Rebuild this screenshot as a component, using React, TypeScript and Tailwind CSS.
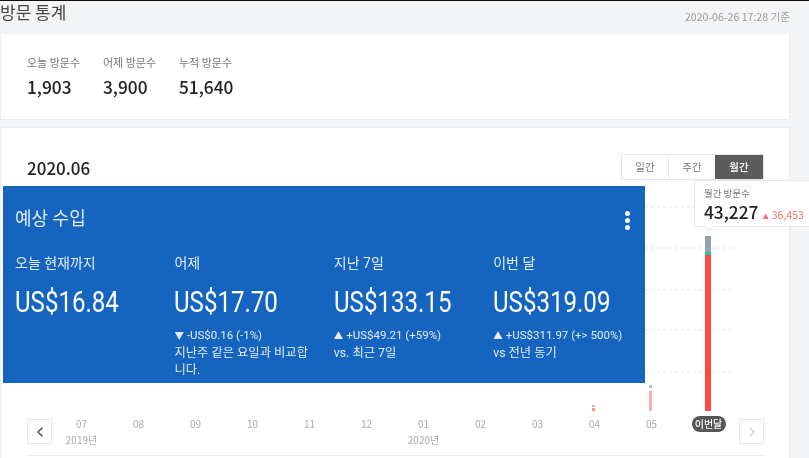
const sans = "font-['Noto_Sans_CJK_KR','Noto_Sans',sans-serif]";
const roboto = "font-['Roboto','Noto_Sans_CJK_KR',sans-serif]";

const totals = [
  { label: "오늘 방문수", value: "1,903" },
  { label: "어제 방문수", value: "3,900" },
  { label: "누적 방문수", value: "51,640" },
];

const earnings = [
  { label: "오늘 현재까지", value: "US$16.84", arrow: "", delta: "", notes: [] as string[] },
  { label: "어제", value: "US$17.70", arrow: "▼", delta: "-US$0.16 (-1%)", notes: ["지난주 같은 요일과 비교합", "니다."] },
  { label: "지난 7일", value: "US$133.15", arrow: "▲", delta: "+US$49.21 (+59%)", notes: ["vs. 최근 7일"] },
  { label: "이번 달", value: "US$319.09", arrow: "▲", delta: "+US$311.97 (+> 500%)", notes: ["vs 전년 동기"] },
];

const months = ["07", "08", "09", "10", "11", "12", "01", "02", "03", "04", "05"];

function Chart() {
  return (
    <svg className="h-[231px] w-full" viewBox="0 0 737 231">
      {[27, 68, 110, 150, 192].map((y) => (
        <line key={y} x1="618" x2="708" y1={y} y2={y} stroke="#e3e5e8" strokeDasharray="3 3" />
      ))}
      <rect x="678" y="56" width="6" height="16" fill="#98a0a8" />
      <rect x="678" y="72" width="6" height="3" fill="#1fc1a0" />
      <rect x="678" y="75" width="6" height="156" fill="#fb4a44" />
      <rect x="622" y="205" width="3" height="3" fill="#b8bec4" />
      <rect x="622" y="211" width="3" height="20" fill="#fbb0ac" />
      <rect x="565" y="225" width="3" height="2" fill="#fbb0ac" />
      <rect x="565" y="228" width="3" height="3" fill="#fb8d88" />
    </svg>
  );
}

export default function App() {
  return (
    <div className={`relative h-[458px] w-[809px] overflow-hidden border-t border-[#111] bg-[#f3f4f6] blur-[0.4px] ${sans}`}>
      {/* 헤더 */}
      <div className="flex h-[32px] w-[790px] items-center justify-between">
        <h1 className="-mt-[10px] text-[17px] leading-[22px] text-[#444]">방문 통계</h1>
        <span className="-mt-[1px] text-[10.6px] text-[#999]">2020-06-26 17:28 기준</span>
      </div>

      {/* 방문수 */}
      <div className="flex h-[87px] w-[790px] gap-[21px] border border-[#ebedf0] bg-white pt-[20px] pl-[26px]">
        {totals.map((t) => (
          <div key={t.label} className="w-[55px]">
            <p className="text-[11px] leading-[16px] whitespace-nowrap text-[#777]">{t.label}</p>
            <p className="mt-[5px] text-[17.3px] leading-[24px] font-medium text-[#222]">{t.value}</p>
          </div>
        ))}
      </div>

      {/* 차트 카드 */}
      <div className="mt-[7px] h-[340px] w-[790px] border border-[#ebedf0] bg-white pt-[26px] pr-[25px] pl-[26px]">
        <div className="flex h-[26px] items-start justify-between">
          <p className="text-[17px] leading-[28px] font-medium text-[#222]">2020.06</p>
          <div className="flex h-[26px] border border-[#e3e5ea] text-[10.5px] text-[#777]">
            <span className="flex w-[47px] items-center justify-center border-r border-[#e3e5ea]">일간</span>
            <span className="flex w-[46px] items-center justify-center">주간</span>
            <span className="flex w-[48px] items-center justify-center bg-[#5c5c5c] font-medium text-white">월간</span>
          </div>
        </div>

        <Chart />

        <div className="mt-[8px] flex items-start">
          <button className="flex h-[25px] w-[25px] shrink-0 items-center justify-center border border-[#e3e5ea] text-[#555]">
            <svg width="8" height="12" viewBox="0 0 8 12" fill="none" stroke="currentColor" strokeWidth="1.5">
              <path d="M6.5 1.5 2 6l4.5 4.5" />
            </svg>
          </button>
          <div className="-mt-[3px] ml-[1px] grid w-[684px] grid-cols-12 text-center text-[10px] leading-[16px] text-[#aaa]">
            {months.map((m) => (
              <span key={m} className="w-[57px]">{m}</span>
            ))}
            <span className="mx-auto w-[34px] rounded-full bg-[#555] text-[10px] font-medium text-white">이번달</span>
            <span className="col-span-6 w-[57px]">2019년</span>
            <span className="col-span-6 w-[57px]">2020년</span>
          </div>
          <button className="ml-[2px] flex h-[25px] w-[25px] shrink-0 items-center justify-center border border-[#e3e5ea] text-[#ccc]">
            <svg width="8" height="12" viewBox="0 0 8 12" fill="none" stroke="currentColor" strokeWidth="1.2">
              <path d="M1.5 1.5 6 6l-4.5 4.5" />
            </svg>
          </button>
        </div>
        <div className="mt-[7px] h-px bg-[#ebedf0]" />
      </div>

      {/* 툴팁 */}
      <div className="absolute top-[179px] left-[694px] h-[47px] w-[120px] border border-[#e6e8ec] bg-white pt-[6px] pl-[9px]">
        <p className="text-[9.5px] leading-[13px] text-[#777]">월간 방문수</p>
        <p className="mt-[1px] flex items-baseline gap-[5px] text-[17.3px] leading-[22px] font-medium text-[#222]">
          43,227 <span className="text-[10.5px] font-normal text-[#fb6a65]">▴ 36,453</span>
        </p>
        <span className="absolute -bottom-[4px] left-[11px] h-[7px] w-[7px] rotate-45 border-r border-b border-[#e6e8ec] bg-white" />
      </div>

      {/* 예상 수입 오버레이 */}
      <div className={`absolute top-[185px] left-[3px] h-[197px] w-[642px] bg-[#1565c0] pt-[20px] pl-[12px] text-[#e3edf9] ${roboto}`}>
        <div className="flex items-center justify-between pr-[15px]">
          <h2 className="text-[18px] leading-[26px]">예상 수입</h2>
          <div className="mt-[3px] flex flex-col gap-[2px]">
            <span className="h-[5px] w-[5px] rounded-full bg-white" />
            <span className="h-[5px] w-[5px] rounded-full bg-white" />
            <span className="h-[5px] w-[5px] rounded-full bg-white" />
          </div>
        </div>
        <div className="mt-[21px] flex">
          {earnings.map((e) => (
            <div key={e.label} className="w-[159.4px] shrink-0">
              <p className="text-[14px] leading-[20px]">{e.label}</p>
              <p className="mt-[11px] origin-left scale-x-[0.83] text-[29px] leading-[36px] whitespace-nowrap text-white">{e.value}</p>
              <div className="mt-[7px] text-[12.3px] leading-[17.5px]">
                {e.delta && (
                  <p className="text-[11.5px] whitespace-nowrap">
                    <span className="mr-[3px] text-[9.5px]">{e.arrow}</span>
                    {e.delta}
                  </p>
                )}
                {e.notes.map((n) => (
                  <p key={n} className="whitespace-nowrap">{n}</p>
                ))}
              </div>
            </div>
          ))}
        </div>
      </div>
    </div>
  );
}
